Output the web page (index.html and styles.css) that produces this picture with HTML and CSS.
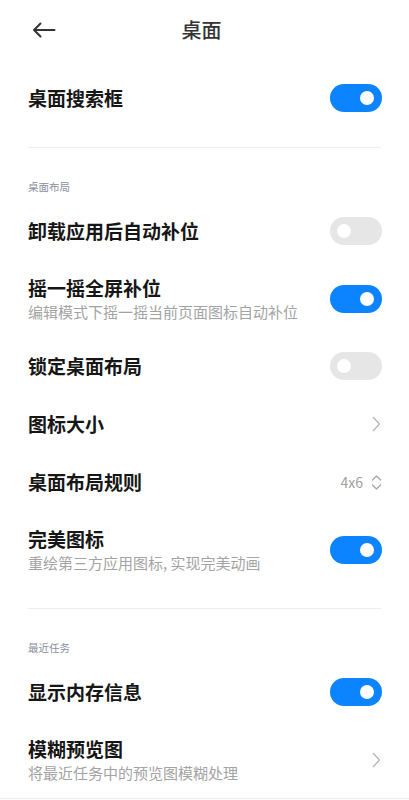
FILE: index.html
```html
<!DOCTYPE html>
<html lang="zh-CN">
<head>
    <meta charset="UTF-8">
    <meta name="viewport" content="width=device-width, initial-scale=1.0">
    <title>桌面</title>
    <link rel="stylesheet" href="styles.css">
</head>
<body>
    <div class="page">
        <header class="topbar">
            <div class="back">
                <svg width="24" height="16" viewBox="0 0 24 16">
                    <path d="M22.5 8H2M8.5 1.5L2 8l6.5 6.5" fill="none" stroke="#333" stroke-width="2" stroke-linecap="round" stroke-linejoin="round"/>
                </svg>
            </div>
            <h1 class="title">桌面</h1>
            <div></div>
        </header>

        <div class="list first">
            <div class="row">
                <span class="label">桌面搜索框</span>
                <span class="switch on"></span>
            </div>
        </div>

        <div class="divider"></div>
        <div class="section">桌面布局</div>

        <div class="list">
            <div class="row">
                <span class="label">卸载应用后自动补位</span>
                <span class="switch"></span>
            </div>
            <div class="row tall">
                <div class="text">
                    <span class="label">摇一摇全屏补位</span>
                    <span class="sub">编辑模式下摇一摇当前页面图标自动补位</span>
                </div>
                <span class="switch on"></span>
            </div>
            <div class="row">
                <span class="label">锁定桌面布局</span>
                <span class="switch"></span>
            </div>
            <div class="row">
                <span class="label">图标大小</span>
                <svg class="chevron" width="9" height="16" viewBox="0 0 9 16">
                    <path d="M1.5 1.5L7.5 8l-6 6.5" fill="none" stroke="#b8b8b8" stroke-width="1.4" stroke-linecap="round" stroke-linejoin="round"/>
                </svg>
            </div>
            <div class="row">
                <span class="label">桌面布局规则</span>
                <span class="value">
                    4x6
                    <svg width="11" height="17" viewBox="0 0 11 17">
                        <path d="M1.5 6L5.5 2l4 4M1.5 11l4 4 4-4" fill="none" stroke="#a8a8a8" stroke-width="1.4" stroke-linecap="round" stroke-linejoin="round"/>
                    </svg>
                </span>
            </div>
            <div class="row tall">
                <div class="text">
                    <span class="label">完美图标</span>
                    <span class="sub">重绘第三方应用图标, 实现完美动画</span>
                </div>
                <span class="switch on"></span>
            </div>
        </div>

        <div class="divider"></div>
        <div class="section">最近任务</div>

        <div class="list">
            <div class="row">
                <span class="label">显示内存信息</span>
                <span class="switch on"></span>
            </div>
            <div class="row tall">
                <div class="text">
                    <span class="label">模糊预览图</span>
                    <span class="sub">将最近任务中的预览图模糊处理</span>
                </div>
                <svg class="chevron" width="9" height="16" viewBox="0 0 9 16">
                    <path d="M1.5 1.5L7.5 8l-6 6.5" fill="none" stroke="#b8b8b8" stroke-width="1.4" stroke-linecap="round" stroke-linejoin="round"/>
                </svg>
            </div>
        </div>
        <div class="bottom-line"></div>
    </div>
</body>
</html>
```

FILE: styles.css
```css
body {
    margin: 0;
    background: #fff;
    font-family: "Noto Sans CJK SC", "Noto Sans", sans-serif;
    color: #1a1a1a;
}
.page {
    width: 409px;
}
.topbar {
    height: 60px;
    display: grid;
    grid-template-columns: 1fr auto 1fr;
    align-items: center;
}
.back {
    padding-left: 32px;
    display: flex;
    align-items: center;
}
.title {
    margin: 0 6px 0 0;
    font-size: 20px;
    font-weight: 500;
    color: #333;
    line-height: 24px;
}
.list.first {
    margin-top: 9px;
}
.row {
    height: 58px;
    padding: 0 27px 0 28px;
    display: flex;
    align-items: center;
    justify-content: space-between;
}
.row.tall {
    height: 77px;
}
.text {
    display: flex;
    flex-direction: column;
}
.label {
    font-size: 19px;
    font-weight: 700;
    line-height: 24px;
    color: #161616;
}
.sub {
    margin-top: 2px;
    font-size: 15px;
    line-height: 20px;
    color: #a3a3a3;
}
.switch {
    width: 52px;
    height: 28px;
    border-radius: 14px;
    background: #e6e6e6;
    position: relative;
    flex-shrink: 0;
}
.switch::after {
    content: "";
    position: absolute;
    top: 7px;
    left: 7px;
    width: 14px;
    height: 14px;
    border-radius: 50%;
    background: #fff;
}
.switch.on {
    background: #0d84ff;
}
.switch.on::after {
    left: auto;
    right: 8px;
}
.chevron {
    margin-right: 1px;
}
.value {
    display: flex;
    align-items: center;
    gap: 8px;
    font-size: 14px;
    color: #a0a0a0;
}
.divider {
    margin: 20px 28px 0;
    height: 1px;
    background: #eeeeee;
}
.section {
    padding: 30px 28px 0;
    margin-bottom: 6px;
    font-size: 10.5px;
    line-height: 18px;
    color: #8a8f9e;
}
.bottom-line {
    height: 1px;
    background: #ececec;
}
```
